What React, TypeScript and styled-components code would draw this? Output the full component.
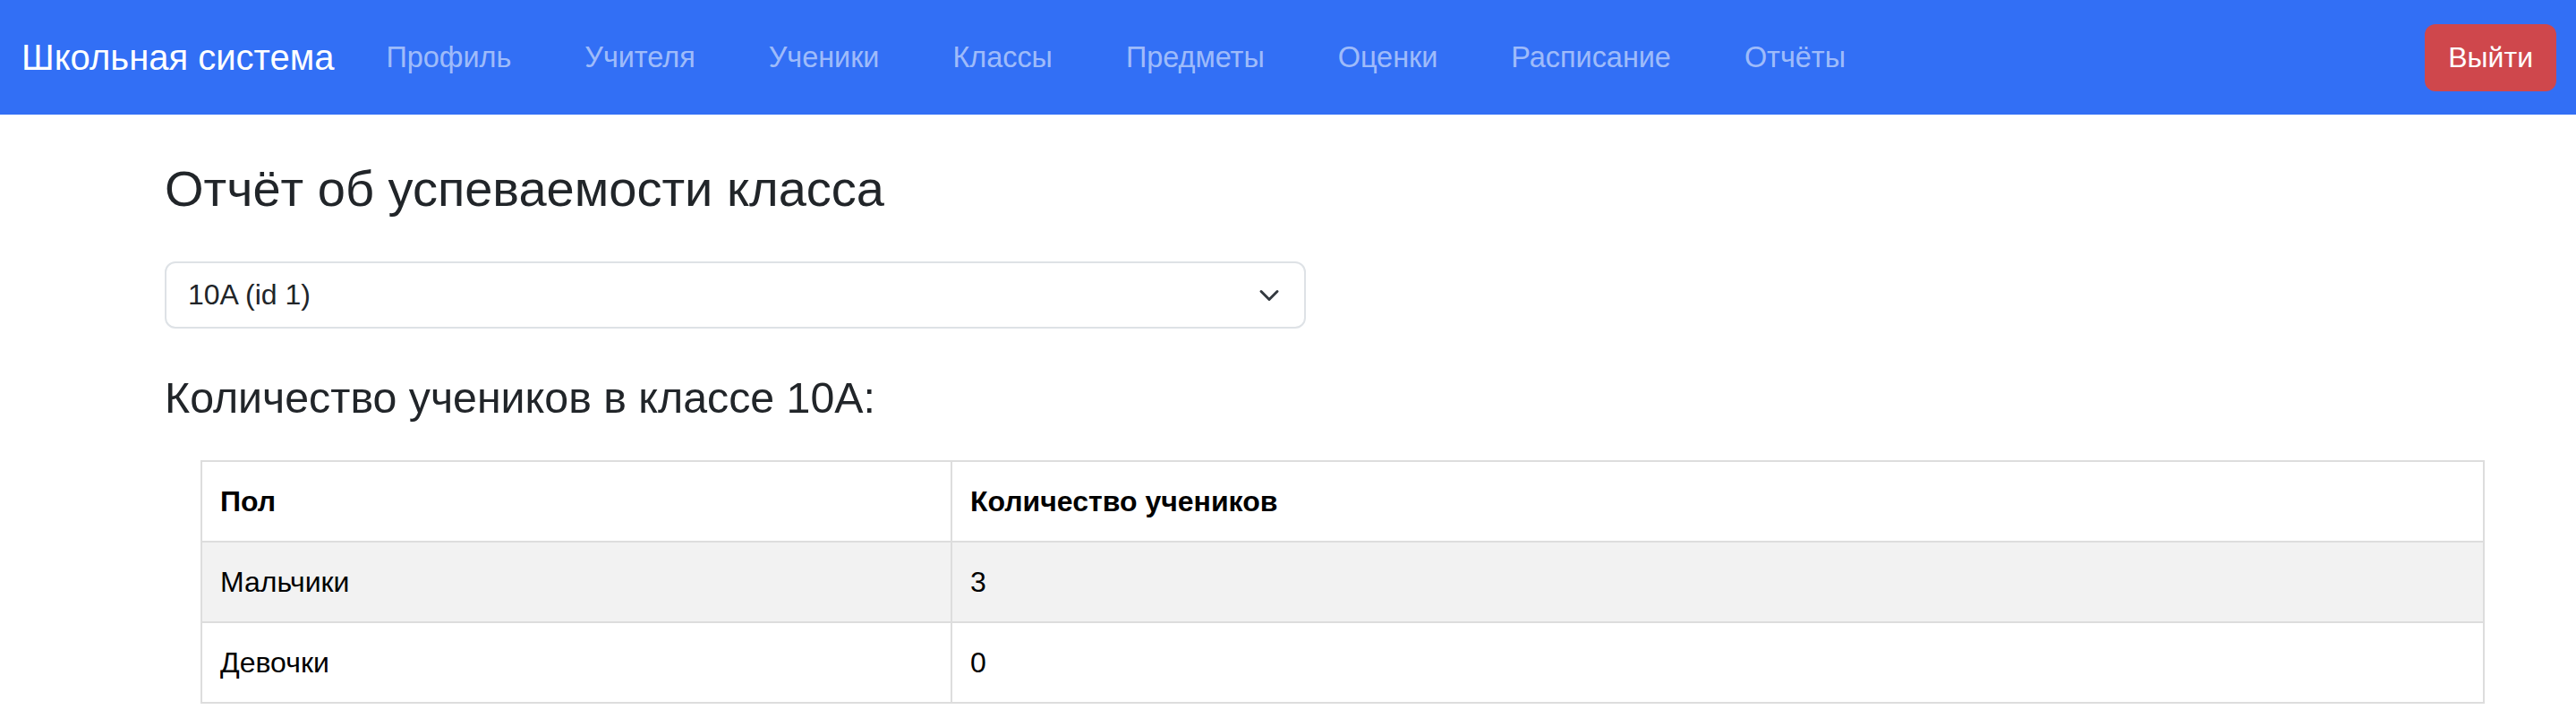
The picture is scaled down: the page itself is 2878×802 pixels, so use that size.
import React from "react";
import styled, { createGlobalStyle } from "styled-components";

const GlobalStyle = createGlobalStyle`
  html, body {
    margin: 0;
    padding: 0;
    background: #ffffff;
    font-family: "Liberation Sans", Arial, sans-serif;
    color: #212529;
  }
  * { box-sizing: border-box; }
`;

const Page = styled.div`
  width: 2878px;
  min-height: 802px;
  display: flex;
  flex-direction: column;
`;

const NavBar = styled.nav`
  height: 128px;
  background: #326ff5;
  display: flex;
  align-items: center;
  padding: 0 22px 0 24px;
`;

const Brand = styled.a`
  font-size: 40px;
  line-height: 48px;
  color: #ffffff;
  text-decoration: none;
  margin-right: 58px;
  white-space: nowrap;
`;

const NavList = styled.ul`
  display: flex;
  align-items: center;
  gap: 82px;
  list-style: none;
  margin: 0;
  padding: 0;
  flex: 1;
`;

const NavLink = styled.a`
  font-size: 32.4px;
  line-height: 48px;
  color: rgba(255, 255, 255, 0.55);
  text-decoration: none;
  white-space: nowrap;
`;

const LogoutButton = styled.button`
  height: 75px;
  padding: 0 26px;
  border: none;
  border-radius: 12px;
  background: #cf474c;
  color: #ffffff;
  font-family: "Liberation Sans", Arial, sans-serif;
  font-size: 32px;
  line-height: 48px;
  cursor: pointer;
`;

const Main = styled.main`
  display: flex;
  flex-direction: column;
  align-items: flex-start;
  padding: 0 62px 0 184px;
`;

const Title = styled.h1`
  margin: 49px 0 0 0;
  font-size: 56px;
  line-height: 67px;
  font-weight: 400;
  color: #212529;
`;

const SelectBox = styled.div`
  margin-top: 48px;
  width: 1275px;
  height: 75px;
  border: 2px solid #dee2e6;
  border-radius: 12px;
  display: flex;
  align-items: center;
  justify-content: space-between;
  padding: 0 27px 0 24px;
  font-size: 32px;
  color: #212529;
  background: #ffffff;
`;

const Chevron = styled.svg`
  width: 24px;
  height: 18px;
  flex: none;
`;

const SubTitle = styled.h2`
  margin: 49px 0 0 0;
  font-size: 48.3px;
  line-height: 57px;
  font-weight: 400;
  color: #212529;
`;

const Table = styled.table`
  margin: 41px 0 0 40px;
  width: calc(100% - 80px);
  border-collapse: collapse;
  table-layout: fixed;
  font-size: 32px;
  line-height: 38px;
  color: #000000;
`;

const HeadCell = styled.th<{ $w?: string }>`
  width: ${(p) => p.$w ?? "auto"};
  text-align: left;
  font-weight: 700;
  padding: 25px 20px;
  border: 2px solid #dddddd;
`;

const Row = styled.tr<{ $striped?: boolean }>`
  background: ${(p) => (p.$striped ? "#f2f2f2" : "#ffffff")};
`;

const Cell = styled.td`
  padding: 25px 20px;
  border: 2px solid #dddddd;
`;

const links = [
  "Профиль",
  "Учителя",
  "Ученики",
  "Классы",
  "Предметы",
  "Оценки",
  "Расписание",
  "Отчёты",
];

const rows = [
  { label: "Мальчики", count: 3 },
  { label: "Девочки", count: 0 },
];

export default function App() {
  return (
    <Page>
      <GlobalStyle />
      <NavBar>
        <Brand href="#">Школьная система</Brand>
        <NavList>
          {links.map((l) => (
            <li key={l}>
              <NavLink href="#">{l}</NavLink>
            </li>
          ))}
        </NavList>
        <LogoutButton>Выйти</LogoutButton>
      </NavBar>
      <Main>
        <Title>Отчёт об успеваемости класса</Title>
        <SelectBox>
          <span>10A (id 1)</span>
          <Chevron viewBox="0 2 16 12">
            <path
              d="m2 5 6 6 6-6"
              fill="none"
              stroke="#343a40"
              strokeWidth="2"
              strokeLinecap="round"
              strokeLinejoin="round"
            />
          </Chevron>
        </SelectBox>
        <SubTitle>Количество учеников в классе 10А:</SubTitle>
        <Table>
          <thead>
            <tr>
              <HeadCell $w="838px">Пол</HeadCell>
              <HeadCell>Количество учеников</HeadCell>
            </tr>
          </thead>
          <tbody>
            {rows.map((r, i) => (
              <Row key={r.label} $striped={i === 0}>
                <Cell>{r.label}</Cell>
                <Cell>{r.count}</Cell>
              </Row>
            ))}
          </tbody>
        </Table>
      </Main>
    </Page>
  );
}
